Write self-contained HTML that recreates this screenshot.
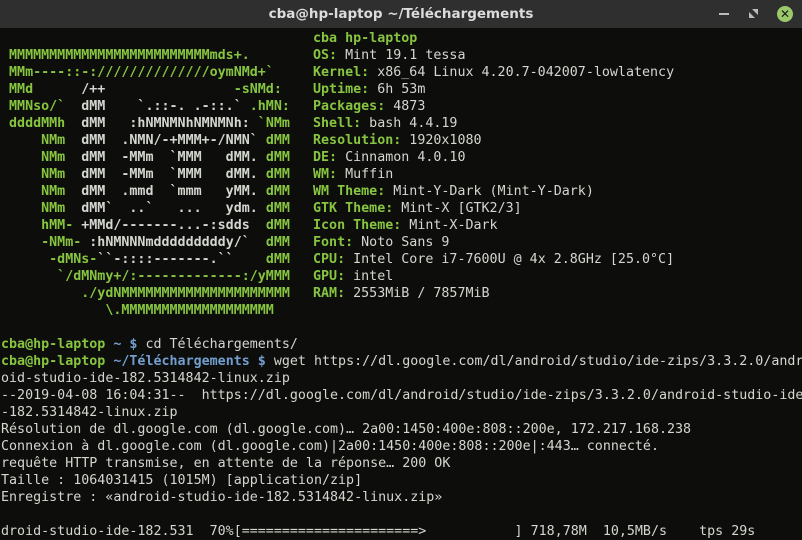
<!DOCTYPE html>
<html><head><meta charset="utf-8"><style>
html,body{margin:0;padding:0;width:802px;height:540px;overflow:hidden;background:#0d0d0b;}
#tb{position:absolute;left:0;top:0;width:802px;height:28px;background:#2f2f2f;}
#title{position:absolute;left:0;width:802px;top:6px;text-align:center;color:#dcdcdc;font:bold 13.5px "DejaVu Sans","Liberation Sans",sans-serif;}
#min{position:absolute;left:719px;top:13px;width:10px;height:2px;background:#bbb;}
#max{position:absolute;left:749px;top:9px;width:9px;height:9px;}
#cl{position:absolute;left:777px;top:6px;width:16px;height:16px;border-radius:50%;background:#9bc86a;color:#1a1a1a;font:bold 12px "DejaVu Sans",sans-serif;text-align:center;line-height:16px;}
pre{position:absolute;left:1px;top:30px;margin:0;font-family:"DejaVu Sans Mono","Liberation Mono",monospace;font-size:13.33px;line-height:17px;color:#d3d7cf;white-space:pre;}
#info{left:313px;}
.g{color:#87c540;font-weight:bold;}
.w{color:#d3d7cf;font-weight:bold;}
.b{color:#729fcf;font-weight:bold;}
</style></head><body>
<div id="tb"><div id="title">cba@hp-laptop ~/Téléchargements</div><div id="min"></div>
<svg id="max" viewBox="0 0 9 9"><path d="M0 3V9H6L0 3ZM3 0H9V6Z" fill="#bbb"/></svg>
<div id="cl">✕</div></div>
<pre> 
<span class="g"> MMMMMMMMMMMMMMMMMMMMMMMMMmds+.</span>
<span class="g"> MMm----::-://////////////oymNMd+`</span>
<span class="g"> MMd      </span><span class="w">/++</span><span class="g">                -sNMd:</span>
<span class="g"> MMNso/`  </span><span class="w">dMM    `.::-. .-::.`</span><span class="g"> .hMN:</span>
<span class="g"> ddddMMh  </span><span class="w">dMM   :hNMNMNhNMNMNh:</span><span class="g"> `NMm</span>
<span class="g">     NMm  </span><span class="w">dMM  .NMN/-+MMM+-/NMN`</span><span class="g"> dMM</span>
<span class="g">     NMm  </span><span class="w">dMM  -MMm  `MMM   dMM.</span><span class="g"> dMM</span>
<span class="g">     NMm  </span><span class="w">dMM  -MMm  `MMM   dMM.</span><span class="g"> dMM</span>
<span class="g">     NMm  </span><span class="w">dMM  .mmd  `mmm   yMM.</span><span class="g"> dMM</span>
<span class="g">     NMm  </span><span class="w">dMM`  ..`   ...   ydm.</span><span class="g"> dMM</span>
<span class="g">     hMM- </span><span class="w">+MMd/-------...-:sdds</span><span class="g">  dMM</span>
<span class="g">     -NMm- </span><span class="w">:hNMNNNmdddddddddy/`</span><span class="g">  dMM</span>
<span class="g">      -dMNs-</span><span class="w">``-::::-------.``</span><span class="g">    dMM</span>
<span class="g">       `/dMNmy+/:-------------:/yMMM</span>
<span class="g">          ./ydNMMMMMMMMMMMMMMMMMMMMM</span>
<span class="g">             \.MMMMMMMMMMMMMMMMMMM</span>

<span class="g">cba@hp-laptop</span> <span class="b">~ $</span> cd Téléchargements/
<span class="g">cba@hp-laptop</span> <span class="b">~/Téléchargements $</span> wget https://dl.google.com/dl/android/studio/ide-zips/3.3.2.0/andr
oid-studio-ide-182.5314842-linux.zip
--2019-04-08 16:04:31--  https://dl.google.com/dl/android/studio/ide-zips/3.3.2.0/android-studio-ide
-182.5314842-linux.zip
Résolution de dl.google.com (dl.google.com)… 2a00:1450:400e:808::200e, 172.217.168.238
Connexion à dl.google.com (dl.google.com)|2a00:1450:400e:808::200e|:443… connecté.
requête HTTP transmise, en attente de la réponse… 200 OK
Taille : 1064031415 (1015M) [application/zip]
Enregistre : «android-studio-ide-182.5314842-linux.zip»

droid-studio-ide-182.531  70%[======================>           ] 718,78M  10,5MB/s    tps 29s</pre>
<pre id="info"><span class="g">cba hp-laptop</span>
<span class="g">OS:</span> Mint 19.1 tessa
<span class="g">Kernel:</span> x86_64 Linux 4.20.7-042007-lowlatency
<span class="g">Uptime:</span> 6h 53m
<span class="g">Packages:</span> 4873
<span class="g">Shell:</span> bash 4.4.19
<span class="g">Resolution:</span> 1920x1080
<span class="g">DE:</span> Cinnamon 4.0.10
<span class="g">WM:</span> Muffin
<span class="g">WM Theme:</span> Mint-Y-Dark (Mint-Y-Dark)
<span class="g">GTK Theme:</span> Mint-X [GTK2/3]
<span class="g">Icon Theme:</span> Mint-X-Dark
<span class="g">Font:</span> Noto Sans 9
<span class="g">CPU:</span> Intel Core i7-7600U @ 4x 2.8GHz [25.0°C]
<span class="g">GPU:</span> intel
<span class="g">RAM:</span> 2553MiB / 7857MiB</pre>
</body></html>
